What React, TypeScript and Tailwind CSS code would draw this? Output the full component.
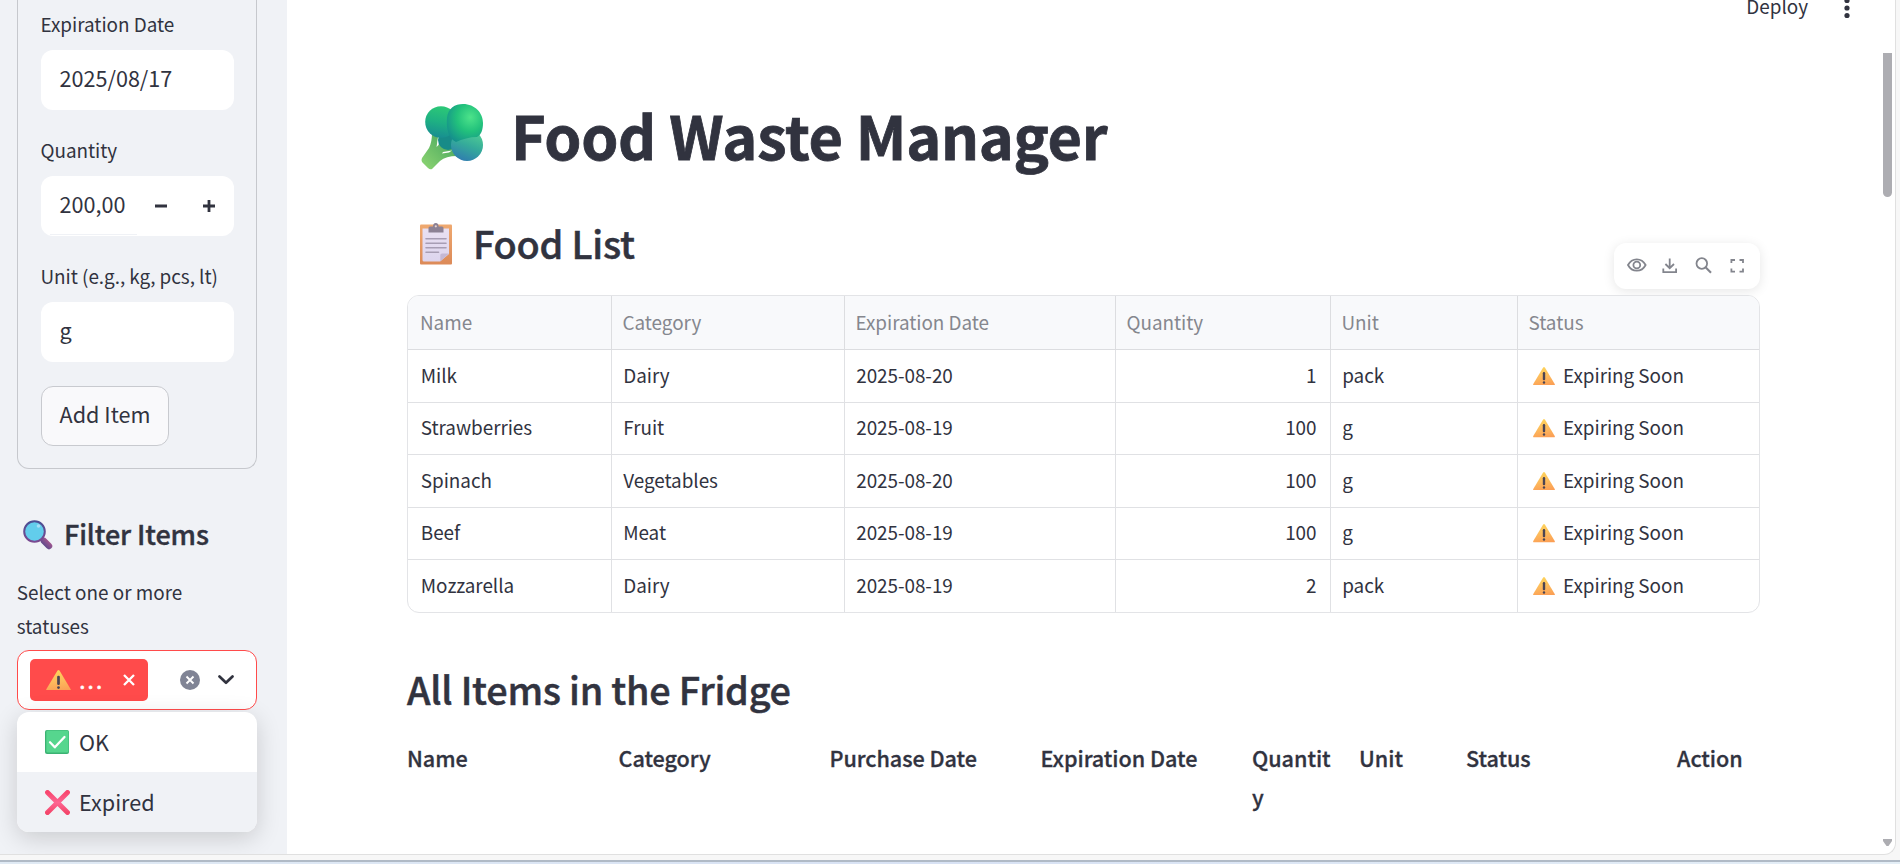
import type { ReactNode } from "react";

function Broccoli() {
  return (
    <svg width="62" height="66" viewBox="0 0 62 66" className="mt-[2px] block">
      <defs>
        <radialGradient id="b1" cx="65%" cy="35%" r="75%">
          <stop offset="0" stopColor="#4de38a" />
          <stop offset=".5" stopColor="#22c17c" />
          <stop offset="1" stopColor="#15908c" />
        </radialGradient>
        <linearGradient id="b2" x1=".5" y1="0" x2=".3" y2="1">
          <stop offset="0" stopColor="#2cc877" />
          <stop offset=".5" stopColor="#1eb083" />
          <stop offset="1" stopColor="#178b92" />
        </linearGradient>
        <linearGradient id="b3" x1=".7" y1="0" x2=".3" y2="1">
          <stop offset="0" stopColor="#52d193" />
          <stop offset=".5" stopColor="#35ab9a" />
          <stop offset="1" stopColor="#2f7bb0" />
        </linearGradient>
        <linearGradient id="b4" x1="1" y1="0" x2="0" y2="1">
          <stop offset="0" stopColor="#3fa05a" />
          <stop offset="1" stopColor="#8fd673" />
        </linearGradient>
      </defs>
      <path d="M11 29 17 31 16.500 40 22 38 27 44 34 46 36 52Q25 52 19 57L11 65Q9 66 7 64L1 58Q0 56 1 54L8 44Q11 38 11 29Z" fill="url(#b4)" />
      <path d="M17 34 20 35 17.500 41 15.500 43ZM22 48 31 46.500 28 48.500 21 49.500Z" fill="#fff" />
      <circle cx="27" cy="36" r="10" fill="#178b88" />
      <circle cx="46" cy="41" r="16" fill="url(#b3)" />
      <circle cx="20" cy="18" r="15.800" fill="url(#b2)" />
      <path d="M26 14C27 4 34 0 42 0C54 0 62 9 62 19C62 26 60 31 56 33C49 33 41 35 35 38C28 35 25 26 26 14Z" fill="url(#b1)" />
    </svg>
  );
}

function Clipboard() {
  return (
    <svg width="32" height="42" viewBox="0 0 32 42" className="block">
      <defs>
        <linearGradient id="cb" x1="0" y1="0" x2="0" y2="1">
          <stop offset="0" stopColor="#efa970" />
          <stop offset="1" stopColor="#dc8a58" />
        </linearGradient>
        <linearGradient id="cp" x1="0" y1="0" x2="0" y2="1">
          <stop offset="0" stopColor="#e9e0f2" />
          <stop offset="1" stopColor="#ddd5ee" />
        </linearGradient>
      </defs>
      <rect x="0" y="1.500" width="32" height="40" rx="1" fill="url(#cb)" />
      <path d="M2.500 5.500h26.500v25.500l-9 7.500H4Q2.500 38.500 2.500 37Z" fill="url(#cp)" />
      <path d="M20.300 38.500V32Q20.300 30.500 22 30.500H29Z" fill="#c5b8d4" />
      <path d="M8.500 9.500V5Q8.500 3.500 10 3.500H13Q13 0 15.800 0T18.600 3.500H22Q23.500 3.500 23.500 5V9.500Z" fill="#8c8194" />
      <circle cx="15.800" cy="3.300" r="1.100" fill="#e8d5cf" />
      <path d="M6 15.800h20M6 20.200h20M6 24.700h20M6 29.200h12.500" stroke="#a79db4" strokeWidth="1.600" strokeLinecap="round" />
    </svg>
  );
}

function Magnifier() {
  return (
    <svg width="30" height="30" viewBox="0 0 30 30" className="-mt-px block">
      <defs>
        <linearGradient id="mh" x1="0" y1="1" x2="1" y2="0">
          <stop offset="0" stopColor="#5f4a8c" />
          <stop offset="1" stopColor="#a2568f" />
        </linearGradient>
        <linearGradient id="mr" x1="0" y1="0" x2="0" y2="1">
          <stop offset="0" stopColor="#4a4e93" />
          <stop offset="1" stopColor="#7a4a91" />
        </linearGradient>
      </defs>
      <path d="M21 21 26 26" stroke="url(#mh)" strokeWidth="6.500" strokeLinecap="round" />
      <circle cx="11.500" cy="11.500" r="10.300" fill="#62cdec" stroke="url(#mr)" strokeWidth="2" />
      <circle cx="15.500" cy="6" r="1.800" fill="#a6e0f7" />
    </svg>
  );
}

function Warning({ size }: { size: number }) {
  return (
    <svg width={size} height={(size * 20) / 24} viewBox="0 0 24 20" className="block shrink-0">
      <defs>
        <linearGradient id="wg" x1=".4" y1="0" x2=".6" y2="1">
          <stop offset="0" stopColor="#fdd45b" />
          <stop offset=".55" stopColor="#fdb95c" />
          <stop offset="1" stopColor="#fb9f55" />
        </linearGradient>
      </defs>
      <path d="M10.900.7Q12-.6 13.100.7L23.700 18.500Q24.300 20 22.800 20H1.200Q-.3 20 .3 18.500Z" fill="url(#wg)" />
      <rect x="10.700" y="5.500" width="2.600" height="9" rx="1.200" fill="#4b4453" />
      <circle cx="12" cy="16.900" r="1.300" fill="#4b4453" />
    </svg>
  );
}

function CheckBox() {
  return (
    <svg width="24" height="24" viewBox="0 0 24 24" className="block">
      <rect width="24" height="24" rx="2" fill="#3bb273" />
      <rect x="1.300" y=".5" width="22.200" height="22" rx="1.500" fill="#56d68e" />
      <path d="M5 12.300 9.800 17.300 19.500 7" fill="none" stroke="#fff" strokeWidth="2.300" strokeLinecap="round" strokeLinejoin="round" />
    </svg>
  );
}

function RedCross() {
  return (
    <svg width="25" height="25" viewBox="0 0 25 25" className="block">
      <defs>
        <linearGradient id="rx" x1="0" y1="0" x2="0" y2="1">
          <stop offset="0" stopColor="#f8476f" />
          <stop offset=".5" stopColor="#fd6592" />
          <stop offset="1" stopColor="#f4466b" />
        </linearGradient>
      </defs>
      <path d="M2.500 2.500 22.500 22.500M22.500 2.500 2.500 22.600" stroke="url(#rx)" strokeWidth="4.900" strokeLinecap="round" />
    </svg>
  );
}

function Label({ children }: { children: ReactNode }) {
  return (
    <div className="mb-[9px] -ml-[0.5px] h-[34px] text-[18.9px] leading-[34px] tracking-[-0.03px] whitespace-nowrap">{children}</div>
  );
}

function Sidebar() {
  return (
    <aside className="flex h-[854px] w-[287px] shrink-0 flex-col bg-[#f0f2f6] pl-[17px]">
      <div className="h-[469px] w-[240px] rounded-b-[12px] border border-t-0 border-[#c6c8cd] pt-[7px] pl-[23px]">
        <Label>Expiration Date</Label>
        <div className="flex h-[60px] w-[193px] items-center rounded-[12px] bg-white pb-[3px] pl-[18.500px] text-[21.6px]">2025/08/17</div>
        <div className="h-[23px]" />
        <Label>Quantity</Label>
        <div className="relative flex h-[60px] w-[193px] items-center rounded-[12px] bg-white pl-[18.500px] text-[21.6px]">
          <span className="w-[77.500px] pb-[3px]">200,00</span>
          <span className="absolute bottom-[1px] left-[9px] h-px w-[87px] bg-[#f0f2f6]" />
          <svg width="96" height="60" viewBox="0 0 96 60" className="block">
            <path d="M18 30H30M66 30H78M72 24V36" stroke="#31333f" strokeWidth="2.800" />
          </svg>
        </div>
        <div className="h-[23px]" />
        <Label>Unit (e.g., kg, pcs, lt)</Label>
        <div className="flex h-[60px] w-[193px] items-center rounded-[12px] bg-white pb-[3px] pl-[18.500px] text-[21.6px]">g</div>
        <button className="mt-[24px] flex h-[60px] w-[128px] items-center justify-center rounded-[12px] border border-[#c8cacf] bg-[#f9f9fb] pb-[3px] text-[21.6px] whitespace-nowrap">
          Add Item
        </button>
      </div>
      <div className="mt-[46px] flex h-[40px] items-center pl-[6px]">
        <Magnifier />
        <h3 className="-mt-[3px] ml-[11px] text-[27px] leading-[40px] font-medium tracking-[-0.1px] whitespace-nowrap [-webkit-text-stroke:0.4px_#31333f]">Filter Items</h3>
      </div>
      <div className="mt-[20px] -ml-[0.3px] w-[230px] text-[18.9px] leading-[34px]">Select one or more statuses</div>
      <div className="mt-[7px] flex h-[60px] w-[240px] shrink-0 items-center rounded-[12px] border border-[#ff4b4b] bg-white pl-[12px]">
        <div className="flex h-[42px] w-[118px] items-center rounded-[5px] bg-[#ff4b4b] pl-[16px]">
          <Warning size={25} />
          <span className="ml-[8px] w-[25px] pb-[2px] text-[24px] leading-[40px] tracking-[1.7px] text-white [-webkit-text-stroke:0.4px_#fff]">...</span>
          <svg width="12" height="12" viewBox="0 0 12 12" className="ml-[19px] block shrink-0">
            <path d="M1 1 11 11M11 1 1 11" stroke="#fff" strokeWidth="2.300" />
          </svg>
        </div>
        <svg width="20" height="20" viewBox="0 0 20 20" className="ml-[32px] block">
          <circle cx="10" cy="10" r="10" fill="#808495" />
          <path d="M6.500 6.500 13.500 13.500M13.500 6.500 6.500 13.500" stroke="#fff" strokeWidth="1.900" />
        </svg>
        <svg width="16" height="10" viewBox="0 0 16 10" className="ml-[18px] block">
          <path d="M1.500 1.500 8 7.800 14.500 1.500" fill="none" stroke="#31333f" strokeWidth="2.700" strokeLinecap="round" strokeLinejoin="round" />
        </svg>
      </div>
      <div className="mt-[2px] h-[120px] w-[240px] shrink-0 overflow-visible rounded-[12px] bg-white text-[21.6px] shadow-[0_6px_24px_rgba(0,0,0,0.16)]">
        <div className="flex h-[60px] items-center pl-[28px]">
          <CheckBox />
          <span className="ml-[10px]">OK</span>
        </div>
        <div className="flex h-[60px] items-center rounded-b-[12px] bg-[#f0f2f6] pl-[28px]">
          <RedCross />
          <span className="ml-[9px]">Expired</span>
        </div>
      </div>
    </aside>
  );
}

function Toolbar() {
  return (
    <div className="mt-[8px] flex h-[46px] w-[146px] items-center rounded-[12px] bg-white pl-[12px] shadow-[0_2px_12px_rgba(0,0,0,0.10)]">
      <svg width="126" height="24" viewBox="0 0 126 24" fill="none" stroke="#83858d" strokeWidth="1.800" className="block">
        <path d="M2 11Q5 5.300 10.800 5.300T19.600 11Q16.600 16.700 10.800 16.700T2 11Z" />
        <circle cx="10.800" cy="11" r="3.400" />
        <path d="M43.700 4.500V14M39.400 10 43.700 14.200 48 10M37.300 14.500V18.200H50.100V14.500" />
        <circle cx="75.800" cy="9.500" r="5.300" />
        <path d="M79.800 13.500 85 18.700" strokeWidth="2.100" />
        <path d="M105.400 9V6H109M113.500 6H117V9M117 14.500V17.600H113.500M109 17.600H105.400V14.500" />
      </svg>
    </div>
  );
}

const rows: string[][] = [
  ["Milk", "Dairy", "2025-08-20", "1", "pack"],
  ["Strawberries", "Fruit", "2025-08-19", "100", "g"],
  ["Spinach", "Vegetables", "2025-08-20", "100", "g"],
  ["Beef", "Meat", "2025-08-19", "100", "g"],
  ["Mozzarella", "Dairy", "2025-08-19", "2", "pack"],
];

const heads = ["Name", "Category", "Expiration Date", "Quantity", "Unit", "Status"];

function FoodTable() {
  return (
    <div className="h-[318px] w-[1353px] shrink-0 overflow-hidden rounded-[12px] border border-[#e3e4e7] text-[18.9px] tracking-[-0.04px]">
      <div className="grid h-[54px] grid-cols-[204px_233px_271px_215px_187px_241px] border-b border-[#dcdde0] bg-[#f8f9fb] text-[#85878e]">
        {heads.map((h, i) => (
          <div
            key={h}
            className={`flex items-center border-[#dcdde0] pb-[1px] whitespace-nowrap ${i === 0 ? "pl-[12px]" : "pl-[10.5px]"} ${i < 5 ? "border-r" : ""}`}
          >
            {h}
          </div>
        ))}
      </div>
      <div className="grid h-[262px] grid-rows-[53px_52px_53px_52px_52px]">
        {rows.map((r, ri) => (
          <div
            key={r[0]}
            className={`grid grid-cols-[204px_233px_271px_215px_187px_241px] border-[#e0e1e4] ${ri < 4 ? "border-b" : ""}`}
          >
            {r.map((c, i) => (
              <div
                key={heads[i]}
                className={`flex items-center border-r border-[#e0e1e4] pb-[2px] whitespace-nowrap ${i === 3 ? "justify-end pr-[13.5px]" : i === 0 ? "pl-[12.8px]" : "pl-[11.2px]"}`}
              >
                {c}
              </div>
            ))}
            <div className="flex items-center pl-[15px] whitespace-nowrap">
              <Warning size={22} />
              <span className="ml-[8px] pb-[2px]">Expiring Soon</span>
            </div>
          </div>
        ))}
      </div>
    </div>
  );
}

function Main() {
  return (
    <main className="flex h-[854px] w-[1595px] shrink-0 flex-col pl-[120px]">
      <header className="flex h-[28px] shrink-0 items-start justify-end pr-[31px] text-[18.9px]">
        <span className="-mt-[10px] leading-[32px]">Deploy</span>
        <svg width="8" height="20" viewBox="0 0 8 20" fill="#31333f" className="ml-[35px] block">
          <circle cx="4" cy=".5" r="2.600" />
          <circle cx="4" cy="8" r="2.600" />
          <circle cx="4" cy="15.500" r="2.600" />
        </svg>
      </header>
      <div className="mt-[68px] flex h-[80px] shrink-0 items-center pl-[14px]">
        <Broccoli />
        <h1 className="-mt-[4px] ml-[28px] text-[59.4px] leading-[80px] font-bold tracking-[-0.3px] whitespace-nowrap [-webkit-text-stroke:0.8px_#31333f]">Food Waste Manager</h1>
      </div>
      <div className="flex h-[119px] shrink-0 justify-between pr-[122px]">
        <div className="mt-[43px] flex h-[50px] items-center pl-[13px]">
          <Clipboard />
          <h2 className="-mt-[3px] ml-[21px] text-[37.8px] leading-[50px] font-medium tracking-[-0.22px] whitespace-nowrap [-webkit-text-stroke:0.5px_#31333f]">Food List</h2>
        </div>
        <div className="pt-[59px]">
          <Toolbar />
        </div>
      </div>
      <FoodTable />
      <h2 className="mt-[51px] h-[50px] shrink-0 text-[37.8px] leading-[50px] font-medium tracking-[-0.22px] whitespace-nowrap [-webkit-text-stroke:0.5px_#31333f]">
        All Items in the Fridge
      </h2>
      <div className="mt-[24px] grid grid-cols-[211.5px_211px_211px_211.5px_107px_107px_211px_120px] text-[21.6px] leading-[39px] font-medium tracking-[-0.04px] whitespace-nowrap [-webkit-text-stroke:0.3px_#31333f]">
        <div>Name</div>
        <div>Category</div>
        <div>Purchase Date</div>
        <div>Expiration Date</div>
        <div>
          Quantit
          <br />y
        </div>
        <div>Unit</div>
        <div>Status</div>
        <div>Action</div>
      </div>
    </main>
  );
}

export default function App() {
  return (
    <div className="h-[864px] w-[1900px] overflow-hidden bg-[#f7f7f7] font-['Noto_Sans_CJK_JP','Noto_Sans',sans-serif] text-[#31333f]">
      <div className="flex h-[855px] w-[1896px] overflow-hidden rounded-br-[12px] border-r border-b border-[#e0e0e0] bg-white">
        <Sidebar />
        <Main />
        <div className="flex w-[13px] shrink-0 flex-col pt-[53px] pl-[1px]">
          <div className="h-[144px] w-[9px] shrink-0 rounded-b-[5px] bg-[#adadb2]" />
          <svg width="9" height="7" viewBox="0 0 9 7" className="mt-[642px] block">
            <path d="M0 0H9V2L5.500 7H3.500L0 2Z" fill="#adadb2" />
          </svg>
        </div>
      </div>
      <div className="mt-[5px] h-[2px] bg-[#b0bac6]" />
      <div className="h-[2px] bg-gradient-to-r from-[#e0eaf4] via-[#d8e2f4] to-[#e4eef6]" />
    </div>
  );
}
